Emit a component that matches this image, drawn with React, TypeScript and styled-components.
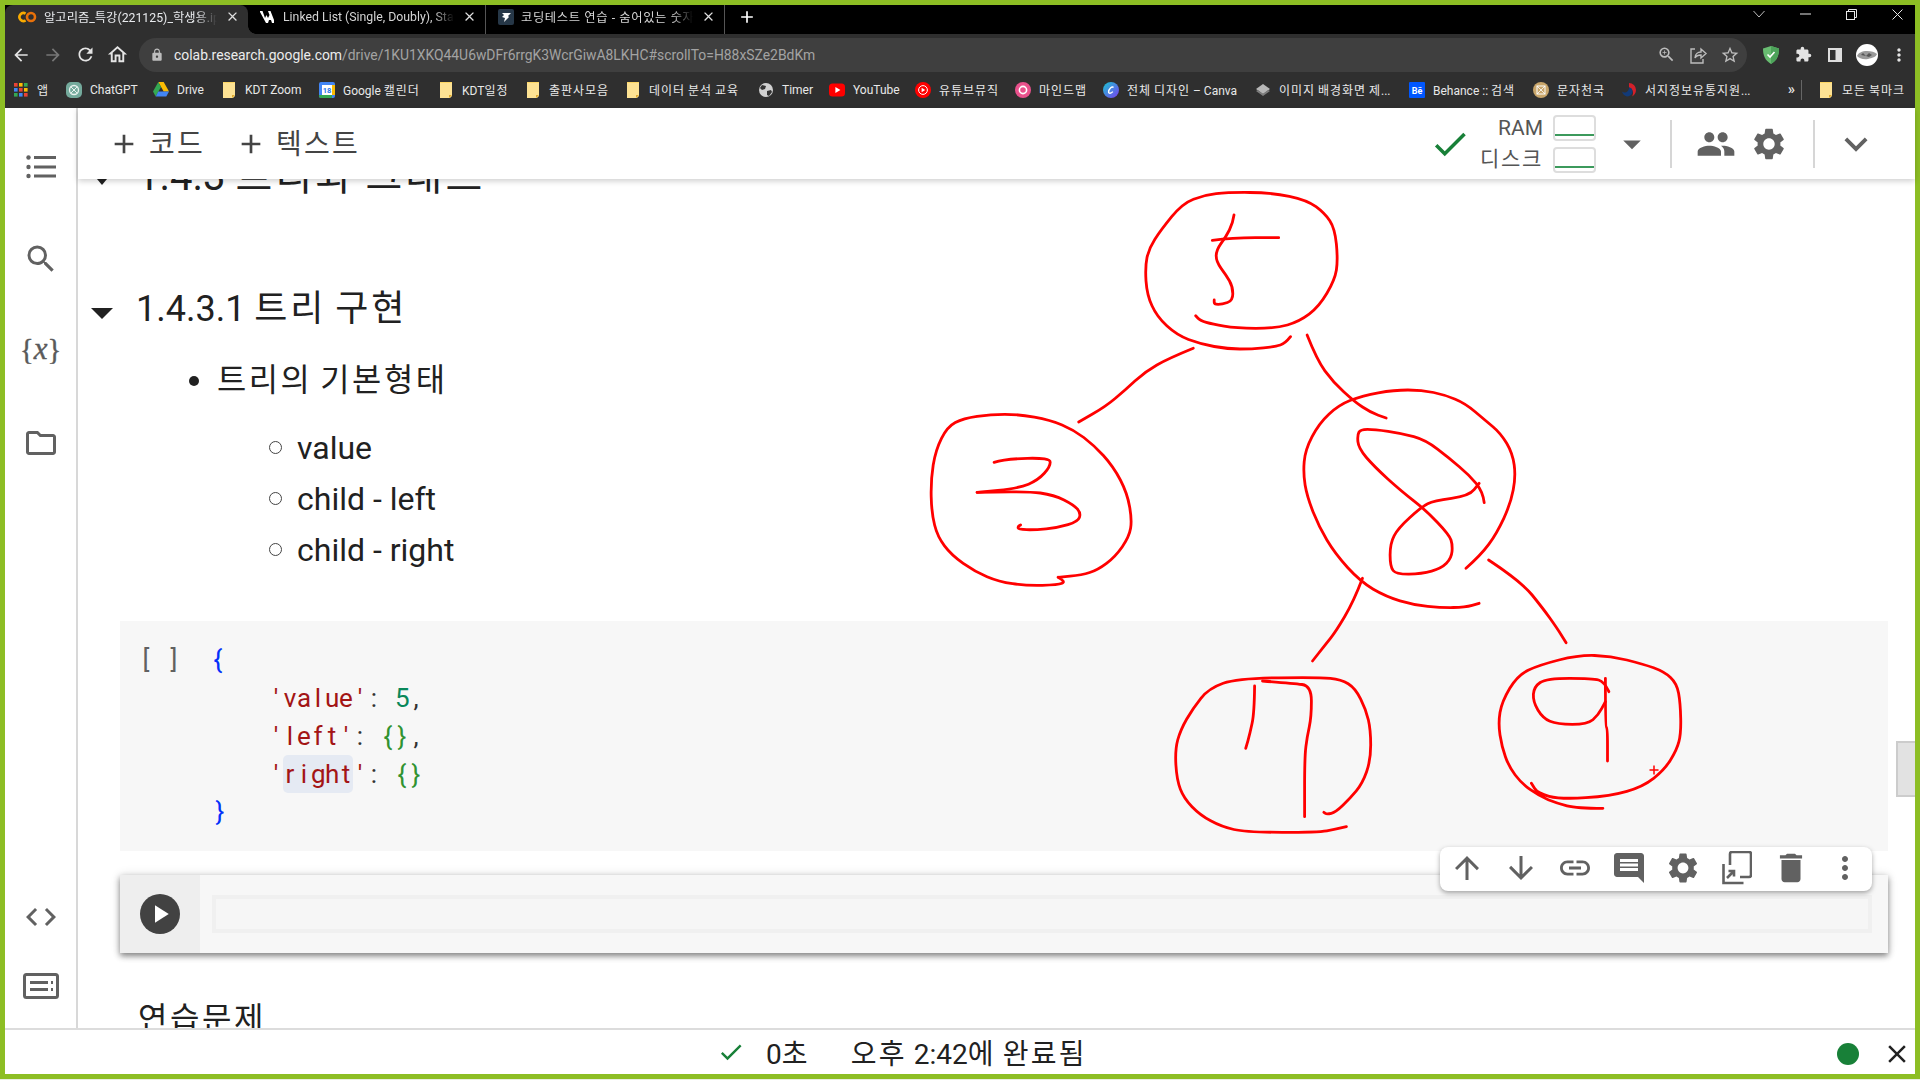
import React from "react";
import styled, { createGlobalStyle } from "styled-components";
import {
  MdAdd, MdArrowBack, MdArrowDownward, MdArrowForward, MdArrowUpward, MdCheck, MdClose, MdCode, MdDelete,
  MdExpandMore, MdExtension, MdInsertComment, MdLink, MdLock, MdMoreVert, MdOutlineFolder, MdOutlineHome,
  MdPeople, MdPlayArrow, MdRefresh, MdSearch, MdSettings, MdStarBorder, MdZoomIn, MdArrowDropDown,
} from "react-icons/md";

const SANS = `Roboto, "Noto Sans CJK KR", sans-serif`;

const Global = createGlobalStyle`
  html, body { margin: 0; padding: 0; background: #e9efe0; }
  #root { width: 1920px; height: 1080px; overflow: hidden; }
  * { box-sizing: border-box; }
`;

const Frame = styled.div`
  width: 1920px; height: 1079px; padding: 5px; background: #8dbe24;
  display: flex; flex-direction: column; font-family: ${SANS}; overflow: hidden;
`;

/* Hangul runs are set with a wider advance, as in the reference's Korean face */
const Ko = styled.span`
  letter-spacing: 0.08em;
`;
const K: React.FC<{ children: string }> = ({ children }) => (
  <>{children.split(/([가-힣]+)/).map((s, i) => (i % 2 ? <Ko key={i}>{s}</Ko> : s))}</>
);

/* ---------- Chrome tab strip ---------- */
const TabStrip = styled.div`
  height: 29px; flex: none; background: #000; display: flex; align-items: stretch; color: #e8eaed;
`;
const Tab = styled.div<{ $active?: boolean; $w: number; $afterActive?: boolean; $sep?: boolean }>`
  width: ${(p) => p.$w}px; flex: none; position: relative; display: flex; align-items: center; gap: 7px;
  padding: 0 8px 6px 12px; font-size: 12.3px;
  background: ${(p) => (p.$active ? "#2f2f2f" : "#000")};
  border-radius: ${(p) => (p.$active ? "8px 8px 0 0" : "0")};
  border-right: ${(p) => (p.$sep ? "1px solid #555" : "none")};
  &::before {
    content: ""; display: ${(p) => (p.$afterActive ? "block" : "none")};
    position: absolute; left: 0; bottom: 0; width: 8px; height: 8px;
    background: radial-gradient(circle at 100% 0, transparent 7.5px, #2f2f2f 8px);
  }
`;
const TabTitle = styled.span<{ $dim?: boolean; $wide?: boolean }>`
  flex: 1; overflow: hidden; white-space: nowrap; min-width: 0;
  color: ${(p) => (p.$dim ? "#d5d5d5" : "#e8eaed")};
  letter-spacing: ${(p) => (p.$wide ? "0.6px" : "0")};
  -webkit-mask-image: linear-gradient(90deg, #000 88%, transparent 100%);
  mask-image: linear-gradient(90deg, #000 88%, transparent 100%);
`;
const TabClose = styled.span`
  flex: none; width: 16px; height: 16px; display: flex; align-items: center; justify-content: center; color: #e0e0e0;
`;
const NewTab = styled.div`
  width: 44px; flex: none; display: flex; align-items: center; justify-content: center; padding-bottom: 5px; color: #fff;
`;
const WindowControls = styled.div`
  margin-left: auto; margin-right: -5px; display: flex; align-items: flex-start;
`;
const WinButton = styled.div`
  width: 46px; height: 18px; display: flex; align-items: center; justify-content: center;
`;

/* ---------- Chrome toolbar ---------- */
const Toolbar = styled.div`
  height: 41px; flex: none; background: #2f2f2f; display: flex; align-items: center;
`;
const NavButton = styled.div<{ $dim?: boolean }>`
  width: 32px; height: 32px; flex: none; display: flex; align-items: center; justify-content: center;
  color: ${(p) => (p.$dim ? "#777" : "#e4e4e4")};
`;
const OmniButton = styled(NavButton)`
  color: #bdbdbd; position: relative; left: -1px;
`;
const Omnibox = styled.div`
  flex: 1; height: 34px; margin-left: 6px; border-radius: 17px; background: #3f3f3f;
  display: flex; align-items: center; padding-left: 11px; color: #bdbdbd;
`;
const Url = styled.div`
  margin-left: 10px; font-size: 13.9px; white-space: nowrap; color: #a3a3a3; flex: 1;
  b { font-weight: 400; color: #ececec; }
`;
const ExtGroup = styled.div`
  display: flex; margin-left: 8px;
`;

/* ---------- Bookmarks ---------- */
const BookmarkBar = styled.div`
  height: 33px; flex: none; background: #2f2f2f; display: flex; align-items: center;
  padding: 0 10px 4px 8px; font-size: 12px; color: #e8e8e8;
`;
const Bookmark = styled.div<{ $w: number }>`
  width: ${(p) => p.$w}px; flex: none; display: flex; align-items: center; gap: 8px; white-space: nowrap;
`;
const BookmarkEnd = styled.div`
  margin-left: auto; display: flex; align-items: center; gap: 8px;
`;
const Chevrons = styled.span`
  font-size: 15px; line-height: 15px; font-weight: 500; margin-right: -8px;
`;
const BarSep = styled.div`
  width: 1px; height: 20px; background: #666; margin: 0 8px 0 6px;
`;

/* ---------- Notebook ---------- */
const Notebook = styled.div`
  flex: 1; min-height: 0; background: #fff; display: flex; flex-direction: column;
`;
const Workspace = styled.div`
  flex: 1; min-height: 0; display: flex;
`;
const Sidebar = styled.aside`
  width: 73px; flex: none; border-right: 2px solid #d8d8d8; display: flex; flex-direction: column;
  align-items: center; padding: 41px 0 24px; color: #616161;
`;
const SideIcon = styled.div<{ $gap?: number; $push?: boolean }>`
  width: 36px; height: 36px; display: flex; align-items: center; justify-content: center;
  margin-top: ${(p) => (p.$push ? "auto" : `${p.$gap ?? 0}px`)}; flex: none;
`;
const VarIcon = styled.span`
  font-family: "Liberation Serif", serif; font-size: 29px; line-height: 30px; color: #5a5a5a; white-space: nowrap;
  padding-bottom: 5px; -webkit-text-stroke: 0.4px #5a5a5a;
  i { font-size: 31px; }
`;
const Pane = styled.div`
  flex: 1; min-width: 0; display: flex; flex-direction: column;
`;
const Header = styled.header`
  height: 71px; flex: none; background: #fff; display: flex; align-items: center; padding: 0 36px 0 30px;
  position: relative; z-index: 3; box-shadow: 0 2px 6px rgba(0, 0, 0, 0.2); color: #444;
`;
const AddButton = styled.div<{ $gap?: number }>`
  display: flex; align-items: center; gap: 9px; font-size: 28px; margin-left: ${(p) => p.$gap ?? 0}px; color: #444;
  span { position: relative; top: -1px; }
`;
const HeaderRight = styled.div`
  margin-left: auto; display: flex; align-items: center;
`;
const GreenCheck = styled.div`
  color: #188038; margin-right: 2px; display: flex; width: 42px; justify-content: center;
`;
const Labels = styled.div`
  width: 70px; text-align: right; font-size: 21px; line-height: 31px; color: #555; margin-right: 10px;
`;
const Meters = styled.div`
  display: flex; flex-direction: column; gap: 6px;
`;
const Meter = styled.div`
  width: 43px; height: 26px; border: 2px solid #ddd; border-radius: 4px; display: flex;
  align-items: flex-end; padding-bottom: 3px;
  &::after { content: ""; display: block; width: 100%; height: 2px; background: #3c9a5c; }
`;
const HeadSep = styled.div`
  width: 2px; height: 48px; background: #d6d6d6; flex: none;
`;
const HeadIcon = styled.div<{ $l: number }>`
  margin-left: ${(p) => p.$l}px; display: flex; color: #616161; flex: none;
`;

const Scroller = styled.div`
  flex: 1; min-height: 0; position: relative; overflow: hidden; color: #212121;
`;
const CutHeading = styled.h2`
  margin: -22px 0 0; height: 40px; font-size: 40px; line-height: 40px; font-weight: 400;
  padding-left: 59px; position: relative; white-space: nowrap;
`;
const SectionHeading = styled.h3`
  margin: 90px 0 0; height: 44px; font-size: 36px; line-height: 44px; font-weight: 400; white-space: nowrap;
  padding-left: 58px; position: relative;
`;
const Caret = styled.span<{ $y: number; $small?: boolean; $x: number }>`
  position: absolute; left: ${(p) => p.$x}px; top: ${(p) => p.$y}px; width: 0; height: 0;
  border-style: solid; border-color: #212121 transparent transparent;
  border-width: ${(p) => (p.$small ? "6px 5px 0" : "11px 11px 0")};
`;
const BulletRow = styled.div`
  margin: 24px 0 0; height: 51px; line-height: 51px; font-size: 31.8px; display: flex; align-items: center;
  padding-left: 111px; white-space: pre;
  &::before { content: ""; width: 10px; height: 10px; border-radius: 50%; background: #212121; margin-right: 18px; flex: none; }
`;
const SubList = styled.div`
  margin-top: 16px; padding-bottom: 45.5px;
`;
const SubRow = styled.div`
  height: 51px; font-size: 32px; display: flex; align-items: center; padding-left: 191px; white-space: nowrap;
  &::before { content: ""; width: 11px; height: 11px; border-radius: 50%; border: 1.5px solid #444; margin-right: 15px; flex: none; }
`;
const CodeCell = styled.section`
  margin: 0 27px 0 42px; height: 230px; background: #f7f7f7; display: flex; padding-top: 19px;
`;
const Gutter = styled.div`
  width: 91px; flex: none; padding-left: 19px; color: #616161;
`;
const CodeBlock = styled.div``;
const CodeLine = styled.div<{ $pad?: number; $h?: number }>`
  height: ${(p) => p.$h ?? 38}px; line-height: 38px; padding-left: ${(p) => p.$pad ?? 0}px; white-space: pre;
`;
const Ch = styled.span`
  display: inline-block; width: 14px; text-align: center; font-family: Roboto, sans-serif; font-size: 26px; line-height: 38px;
`;
const Tok = styled.span<{ $c: string; $hl?: boolean }>`
  color: ${(p) => p.$c}; display: inline-block; height: 38px;
  background: ${(p) => (p.$hl ? "#e5eaf3" : "transparent")}; border-radius: 5px;
`;
const RunCell = styled.section`
  margin: 24px 27px 0 42px; height: 78px; background: #f7f7f7; display: flex; position: relative;
  box-shadow: 0 3px 6px rgba(0, 0, 0, 0.45), 0 0 10px rgba(0, 0, 0, 0.12);
`;
const RunGutter = styled.div`
  width: 80px; flex: none; background: #eee; display: flex; align-items: center; justify-content: center; padding-top: 1px;
`;
const RunButton = styled.div`
  width: 40px; height: 40px; border-radius: 50%; background: #424242; color: #fff; display: flex;
  align-items: center; justify-content: center;
`;
const Editor = styled.div`
  height: 38px; flex: 1; margin: 20px 16px 0 12px; border: 4px solid #f0f0f0; background: #f6f6f6;
`;
const CellToolbar = styled.div`
  position: absolute; top: -28px; right: 16px; width: 432px; height: 44px; background: #fff; border-radius: 8px;
  box-shadow: 0 2px 5px rgba(0, 0, 0, 0.35); display: flex; align-items: center; padding: 0 0 1px 0; color: #616161; z-index: 2;
`;
const ToolButton = styled.div`
  width: 54px; height: 42px; flex: none; display: flex; align-items: center; justify-content: center;
`;
const NextTitle = styled.div`
  margin: 43px 0 0 60px; font-size: 32px; line-height: 46px;
`;
const Sketch = styled.svg`
  position: absolute; left: 0; top: 0; pointer-events: none; z-index: 1;
`;
const ScrollThumb = styled.div`
  position: absolute; right: 0; top: 562px; width: 19px; height: 56px; background: #e2e2e2; border: 2px solid #ccc; border-right: 0; z-index: 1;
`;
const StatusBar = styled.footer`
  height: 46px; flex: none; border-top: 2px solid #dcdcdc; display: flex; align-items: center; padding: 0 3px 0 712px;
  font-size: 28px; color: #212121; background: #fff; white-space: pre;
`;
const StatusCheck = styled.div`
  display: flex; color: #188038; margin-right: 21px;
`;
const StatusTime = styled.span`
  margin-right: 41px;
`;
const StatusRight = styled.div`
  margin-left: auto; display: flex; align-items: center; gap: 23px; color: #212121; padding-top: 4px;
`;
const GreenDot = styled.div`
  width: 22px; height: 22px; border-radius: 50%; background: #188038;
`;

/* ---------- Drawings ---------- */
const Folder = () => (
  <svg width="16" height="18" viewBox="0 0 16 18">
    <path d="M2 1h12v14l-2 2H2z" fill="#fde293" />
    <path d="M11 17v-3h3z" fill="#e0a92c" />
    <path d="M2 1h12v1H2z" fill="#fdd663" />
  </svg>
);
const Fav: React.FC<{ k: string }> = ({ k }) => {
  switch (k) {
    case "apps":
      return (
        <svg width="16" height="14" viewBox="0 0 16 14">
          {["#ea4335", "#fbbc04", "#34a853", "#4285f4", "#ea4335", "#fbbc04", "#34a853", "#4285f4", "#ea4335"].map((c, i) => (
            <rect key={i} x={1 + (i % 3) * 5} y={Math.floor(i / 3) * 5} width="3.6" height="3.6" fill={c} />
          ))}
        </svg>
      );
    case "gpt":
      return (
        <svg width="16" height="16" viewBox="0 0 16 16">
          <rect width="16" height="16" rx="5" fill="#74aa9c" />
          <circle cx="8" cy="8" r="4.5" fill="none" stroke="#e8f2ef" strokeWidth="1.3" />
          <path d="M5 5l6 6M11 5l-6 6" stroke="#e8f2ef" strokeWidth="1" />
        </svg>
      );
    case "drive":
      return (
        <svg width="16" height="15" viewBox="0 0 16 15">
          <path d="M5.3 0h5.4L16 9.5h-5.3z" fill="#fbbc04" />
          <path d="M5.3 0 0 9.5l2.7 4.9L8 5z" fill="#34a853" />
          <path d="M2.7 14.4h10.6L16 9.5H5.3z" fill="#4285f4" />
        </svg>
      );
    case "folder":
      return <Folder />;
    case "cal":
      return (
        <svg width="16" height="16" viewBox="0 0 16 16">
          <rect width="16" height="16" rx="2" fill="#4285f4" />
          <rect x="3" y="3" width="10" height="10" fill="#fff" />
          <path d="M0 13h13v3H2a2 2 0 0 1-2-2z" fill="#34a853" />
          <path d="M13 3h3v10h-3z" fill="#fbbc04" />
          <text x="8" y="11" fontSize="7.5" textAnchor="middle" fill="#1a73e8" fontFamily="Roboto" fontWeight="700">18</text>
        </svg>
      );
    case "globe":
      return (
        <svg width="16" height="16" viewBox="0 0 16 16">
          <circle cx="8" cy="8" r="7" fill="#d0d0d0" />
          <path d="M4 3l4 1-1 3-3 1-2-2zM9 9l4-1 1 2-3 4-2-1z" fill="#333" />
        </svg>
      );
    case "yt":
      return (
        <svg width="16" height="16" viewBox="0 0 16 16">
          <rect y="1.5" width="16" height="13" rx="3.5" fill="#f00" />
          <path d="M6.4 5v6l5-3z" fill="#fff" />
        </svg>
      );
    case "ytm":
      return (
        <svg width="16" height="16" viewBox="0 0 16 16">
          <circle cx="8" cy="8" r="8" fill="#f00" />
          <circle cx="8" cy="8" r="4.4" fill="none" stroke="#fff" />
          <path d="M6.6 5.8v4.4L10.2 8z" fill="#fff" />
        </svg>
      );
    case "mind":
      return (
        <svg width="16" height="16" viewBox="0 0 16 16">
          <circle cx="8" cy="8" r="8" fill="#e9518c" />
          <circle cx="8" cy="8" r="3.6" fill="none" stroke="#fff" strokeWidth="1.6" />
        </svg>
      );
    case "canva":
      return (
        <svg width="16" height="16" viewBox="0 0 16 16">
          <defs>
            <linearGradient id="cv" x1="0" y1="0" x2="1" y2="1">
              <stop offset="0" stopColor="#19c6d0" />
              <stop offset="1" stopColor="#7b3ff2" />
            </linearGradient>
          </defs>
          <circle cx="8" cy="8" r="8" fill="url(#cv)" />
          <path d="M10.5 5.4C9 3.8 5.6 7 5.6 10c0 2 2.6 1.4 4.2-.4" fill="none" stroke="#fff" strokeWidth="1.4" />
        </svg>
      );
    case "img":
      return (
        <svg width="16" height="14" viewBox="0 0 16 14">
          <path d="M8 1l7 5-7 5-7-5z" fill="#b7b7b7" />
          <path d="M1 8l7 5 7-5-2-1-5 4-5-4z" fill="#7d7d7d" />
        </svg>
      );
    case "be":
      return (
        <svg width="16" height="16" viewBox="0 0 16 16">
          <rect width="16" height="16" rx="1" fill="#0057ff" />
          <text x="8" y="11.5" fontSize="9" textAnchor="middle" fill="#fff" fontWeight="700" fontFamily="Roboto">Bē</text>
        </svg>
      );
    case "mun":
      return (
        <svg width="16" height="16" viewBox="0 0 16 16">
          <circle cx="8" cy="8" r="8" fill="#c9a66b" />
          <rect x="4" y="4" width="8" height="8" fill="none" stroke="#fff" />
          <path d="M4 4l8 8M12 4l-8 8" stroke="#fff" strokeWidth=".8" />
        </svg>
      );
    case "kisti":
      return (
        <svg width="16" height="16" viewBox="0 0 16 16">
          <path d="M8 1a7 7 0 0 1 7 7c0 3-2 5.500-4 6.500 2-3 1-8-3-9z" fill="#d3202a" />
          <path d="M8 5.500c3 0 4 3 3 6-1 2-3 3-5 3a7 7 0 0 1-5-5c2 2 7 1 7-4z" fill="#123a78" />
        </svg>
      );
    default:
      return null;
  }
};

const ColabLogo = () => (
  <svg width="20" height="12" viewBox="0 0 20 12">
    <path d="M8.6 2.6A4 4 0 1 0 8.600 9.400" fill="none" stroke="#f9ab00" strokeWidth="2.600" />
    <circle cx="14" cy="6" r="4" fill="none" stroke="#e8710a" strokeWidth="2.600" />
  </svg>
);
const VaLogo = () => (
  <svg width="16" height="12" viewBox="0 0 16 12">
    <path d="M0 0h2.500L5 7l1.500-3 1.500 3 1.500-3L8 0h2.500L14 9v3h-2l-1-3H9l-1 3H6L0 1z" fill="#fff" />
  </svg>
);
const ProgLogo = () => (
  <svg width="16" height="16" viewBox="0 0 16 16">
    <rect width="16" height="16" rx="2" fill="#263747" />
    <path d="M4 4h9l-3 3 1 1-5 5 1-4-3-1 2-2z" fill="#fff" />
  </svg>
);
const ShareIcon = () => (
  <svg width="20" height="20" viewBox="0 0 20 20" fill="none" stroke="currentColor" strokeWidth="1.400">
    <path d="M7 4H3v14h12v-4" />
    <path d="M7 13c0-4 3-6 6-6V4l5 4.500-5 4.500V10c-3 0-5 1-6 3z" />
  </svg>
);
const ShieldIcon = () => (
  <svg width="16" height="18" viewBox="0 0 16 18">
    <path d="M8 0l8 2.500c0 7-2 12-8 15.500C2 14.500 0 9.500 0 2.500z" fill="#68bc71" />
    <path d="M8 0l8 2.500c0 7-2 12-8 15.500z" fill="#4da35a" />
    <path d="M4.500 8.500l2.500 2.500 4.500-5" fill="none" stroke="#fff" strokeWidth="1.600" />
  </svg>
);
const PanelIcon = () => (
  <svg width="14" height="14" viewBox="0 0 14 14">
    <rect x="0" y="0" width="14" height="14" fill="#dedede" />
    <rect x="2" y="2" width="5.500" height="10" fill="#2f2f2f" />
  </svg>
);
const Avatar = () => (
  <svg width="22" height="22" viewBox="0 0 22 22">
    <circle cx="11" cy="11" r="11" fill="#fff" />
    <path d="M1 12c1-3 5-5 10-5 4 0 8 1 10 3-1 3-5 4-9 5-5 1-9-1-11-3z" fill="#9a9a9a" />
    <path d="M5 11l2-2 3 3 3-3 3 2-3 2-3-1z" fill="#555" />
  </svg>
);
const TocIcon = () => (
  <svg width="30" height="24" viewBox="0 0 30 24" fill="#616161">
    <circle cx="2.500" cy="2.500" r="2.200" /><rect x="8" y="1" width="22" height="3" />
    <circle cx="2.500" cy="12" r="2.200" /><rect x="8" y="10.500" width="22" height="3" />
    <circle cx="2.500" cy="21" r="2.200" /><rect x="8" y="19.500" width="22" height="3" />
  </svg>
);
const TerminalIcon = () => (
  <svg width="36" height="26" viewBox="0 0 36 26" fill="none">
    <rect x="1.500" y="1.500" width="33" height="23" rx="2" stroke="#616161" strokeWidth="3" />
    <path d="M7 9.500h18M7 16.500h18" stroke="#616161" strokeWidth="3" />
    <path d="M28 9.500h2M28 16.500h2" stroke="#616161" strokeWidth="3" />
  </svg>
);
const MirrorIcon = () => (
  <svg width="30" height="34" viewBox="0 0 30 34" fill="none" stroke="#616161" strokeWidth="2.600">
    <path d="M8 14V3a2 2 0 0 1 2-2h17a2 2 0 0 1 2 2v21a2 2 0 0 1-2 2h-9" />
    <path d="M1.500 13v19h20" />
    <path d="M5 27l7-7M6.500 20H12v5.500" />
  </svg>
);

/* ---------- Hand sketch ---------- */
type P = number[][];
const path = (ox: number, oy: number, kx: number, pts: P) => {
  const q = pts.map(([x, y]) => [ox + x / kx, oy + y / 3]);
  let d = `M${q[0][0].toFixed(1)} ${q[0][1].toFixed(1)}`;
  for (let i = 1; i < q.length - 1; i++) {
    const mx = (q[i][0] + q[i + 1][0]) / 2;
    const my = (q[i][1] + q[i + 1][1]) / 2;
    d += ` Q${q[i][0].toFixed(1)} ${q[i][1].toFixed(1)} ${mx.toFixed(1)} ${my.toFixed(1)}`;
  }
  const l = q[q.length - 1];
  return d + ` L${l[0].toFixed(1)} ${l[1].toFixed(1)}`;
};
const upper: P[] = [
  [[988,500],[975,520],[950,530],[890,537],[830,537],[760,522],[700,495],[650,440],[625,375],[620,290],[630,235],[660,180],[715,100],[770,75],[830,67],[940,68],[1030,90],[1075,130],[1100,175],[1108,270],[1100,330],[1060,410],[1010,455],[950,475],[850,475],[790,462],[760,452],[748,437]],
  [[845,135],[842,160],[825,200],[800,240],[800,275],[825,315],[842,350],[842,392],[815,403],[795,403],[795,390]],
  [[790,211],[840,203],[958,203]],
  [[742,535],[680,565],[620,605],[570,660],[520,710],[452,756]],
  [[1030,495],[1055,570],[1095,635],[1150,695],[1190,727],[1230,744]],
  [[400,1222],[420,1235],[400,1245],[320,1247],[250,1235],[190,1205],[130,1155],[95,1100],[80,1030],[78,930],[90,840],[120,770],[160,745],[230,733],[300,733],[380,750],[440,780],[490,825],[540,890],[575,970],[587,1050],[580,1100],[545,1160],[500,1200],[460,1215],[400,1222]],
  [[238,877],[265,867],[380,863],[380,890],[350,930],[300,955],[195,967]],
  [[195,967],[320,963],[390,975],[440,1005],[458,1030],[450,1055],[400,1073],[340,1080],[300,1078],[298,1070],[305,1065]],
  [[1432,1195],[1470,1155],[1510,1090],[1545,1000],[1558,920],[1550,850],[1520,790],[1480,750],[1430,700],[1380,675],[1320,660],[1250,660],[1170,677],[1110,705],[1060,760],[1025,840],[1020,910],[1030,980],[1060,1070],[1100,1150],[1165,1235],[1230,1280],[1300,1305],[1370,1313],[1430,1312],[1465,1300]],
  [[1478,998],[1475,965],[1440,915],[1390,865],[1330,810],[1270,790],[1200,778],[1165,778],[1157,795],[1160,835],[1200,890],[1270,965],[1330,1020],[1390,1095],[1398,1125],[1395,1165],[1370,1195],[1320,1212],[1255,1213],[1240,1190],[1240,1120],[1260,1075],[1320,1010],[1350,992],[1440,978],[1465,940]],
];
const lower: P[] = [
  [[948,0],[1040,65],[1100,145],[1140,205],[1165,248]],
  [[595,55],[570,125],[520,215],[490,255],[455,303]],
  [[550,800],[520,808],[470,817],[270,817],[200,800],[140,765],[95,715],[75,660],[70,570],[85,510],[120,445],[165,385],[245,355],[475,352],[535,358],[575,385],[605,450],[618,510],[618,600],[595,670],[560,715],[520,757],[495,763],[487,757]],
  [[293,378],[292,460],[280,520],[268,565]],
  [[315,363],[400,370],[452,377],[452,470],[440,530],[433,590],[433,770]],
  [[1268,745],[1195,745],[1140,730],[1090,708],[1040,670],[1005,620],[985,560],[975,490],[985,425],[1030,345],[1090,315],[1200,285],[1290,288],[1380,312],[1440,335],[1475,370],[1485,430],[1487,520],[1475,570],[1440,630],[1380,680],[1290,708],[1150,718],[1085,700],[1068,670]],
  [[1285,395],[1272,365],[1240,355],[1110,355],[1075,380],[1072,425],[1100,475],[1140,493],[1225,493],[1255,465],[1275,425]],
  [[1275,355],[1275,500],[1281,505],[1281,603]],
];

const Glyphs: React.FC<{ t: string }> = ({ t }) => (
  <>
    {Array.from(t).map((c, i) => (
      <Ch key={i}>{c}</Ch>
    ))}
  </>
);

const marks: [string, string, number][] = [
  ["apps", "앱", 53], ["gpt", "ChatGPT", 87], ["drive", "Drive", 68], ["folder", "KDT Zoom", 98],
  ["cal", "Google 캘린더", 119], ["folder", "KDT일정", 87], ["folder", "출판사모음", 100], ["folder", "데이터 분석 교육", 133],
  ["globe", "Timer", 71], ["yt", "YouTube", 86], ["ytm", "유튜브뮤직", 100], ["mind", "마인드맵", 88],
  ["canva", "전체 디자인 – Canva", 152], ["img", "이미지 배경화면 제...", 154], ["be", "Behance :: 검색", 124], ["mun", "문자천국", 88],
  ["kisti", "서지정보유통지원...", 150],
];

const STR = "#a31515";
const GRN = "#319331";
const BLU = "#0431fa";
const INK = "#333";

export default function App() {
  return (
    <>
      <Global />
      <Frame>
        <TabStrip>
          <Tab $active $w={243}>
            <ColabLogo />
            <TabTitle>알고리즘_특강(221125)_학생용.ipynb</TabTitle>
            <TabClose><MdClose size={15} /></TabClose>
          </Tab>
          <Tab $w={238} $afterActive $sep>
            <VaLogo />
            <TabTitle $dim>Linked List (Single, Doubly), Stack, Queue</TabTitle>
            <TabClose><MdClose size={15} /></TabClose>
          </Tab>
          <Tab $w={239} $sep>
            <ProgLogo />
            <TabTitle $dim $wide>코딩테스트 연습 - 숨어있는 숫자의 덧셈</TabTitle>
            <TabClose><MdClose size={15} /></TabClose>
          </Tab>
          <NewTab><MdAdd size={20} /></NewTab>
          <WindowControls>
            <WinButton>
              <svg width="12" height="8" viewBox="0 0 12 8" fill="none" stroke="#bbb"><path d="M.5 1 6 7l5.500-6" /></svg>
            </WinButton>
            <WinButton><svg width="11" height="2" viewBox="0 0 11 2"><path d="M0 1h11" stroke="#e8e8e8" /></svg></WinButton>
            <WinButton>
              <svg width="11" height="11" viewBox="0 0 11 11" fill="none" stroke="#e8e8e8"><rect x=".5" y="2.500" width="8" height="8" /><path d="M2.500 2.500v-2h8v8h-2" /></svg>
            </WinButton>
            <WinButton>
              <svg width="11" height="11" viewBox="0 0 11 11" fill="none" stroke="#e8e8e8"><path d="M.5.500l10 10M10.500.500l-10 10" /></svg>
            </WinButton>
          </WindowControls>
        </TabStrip>

        <Toolbar>
          <NavButton><MdArrowBack size={20} /></NavButton>
          <NavButton $dim><MdArrowForward size={20} /></NavButton>
          <NavButton><MdRefresh size={21} /></NavButton>
          <NavButton><MdOutlineHome size={23} /></NavButton>
          <Omnibox>
            <MdLock size={14} />
            <Url><b>colab.research.google.com</b>/drive/1KU1XKQ44U6wDFr6rrgK3WcrGiwA8LKHC#scrollTo=H88xSZe2BdKm</Url>
            <OmniButton><MdZoomIn size={19} /></OmniButton>
            <OmniButton><ShareIcon /></OmniButton>
            <OmniButton><MdStarBorder size={20} /></OmniButton>
          </Omnibox>
          <ExtGroup>
            <NavButton><ShieldIcon /></NavButton>
            <NavButton><MdExtension size={17} /></NavButton>
            <NavButton><PanelIcon /></NavButton>
            <NavButton><Avatar /></NavButton>
            <NavButton><MdMoreVert size={20} /></NavButton>
          </ExtGroup>
        </Toolbar>

        <BookmarkBar>
          {marks.map(([k, t, w]) => (
            <Bookmark key={t} $w={w}><Fav k={k} /><span><K>{t}</K></span></Bookmark>
          ))}
          <BookmarkEnd>
            <Chevrons>»</Chevrons>
            <BarSep />
            <Folder />
            <span><K>모든 북마크</K></span>
          </BookmarkEnd>
        </BookmarkBar>

        <Notebook>
          <Workspace>
            <Sidebar>
              <SideIcon><TocIcon /></SideIcon>
              <SideIcon $gap={56}><MdSearch size={36} /></SideIcon>
              <SideIcon $gap={56}><VarIcon>{"{"}<i>x</i>{"}"}</VarIcon></SideIcon>
              <SideIcon $gap={56}><MdOutlineFolder size={42} /></SideIcon>
              <SideIcon $push><MdCode size={38} /></SideIcon>
              <SideIcon $gap={33}><TerminalIcon /></SideIcon>
            </Sidebar>
            <Pane>
              <Header>
                <AddButton><MdAdd size={32} /><span><K>코드</K></span></AddButton>
                <AddButton $gap={30}><MdAdd size={32} /><span><K>텍스트</K></span></AddButton>
                <HeaderRight>
                  <GreenCheck><MdCheck size={42} /></GreenCheck>
                  <Labels>RAM<br /><K>디스크</K></Labels>
                  <Meters><Meter /><Meter /></Meters>
                  <HeadIcon $l={15}><MdArrowDropDown size={42} /></HeadIcon>
                  <HeadIcon $l={17}><HeadSep /></HeadIcon>
                  <HeadIcon $l={24}><MdPeople size={40} /></HeadIcon>
                  <HeadIcon $l={14}><MdSettings size={38} /></HeadIcon>
                  <HeadIcon $l={25}><HeadSep /></HeadIcon>
                  <HeadIcon $l={18}><MdExpandMore size={46} /></HeadIcon>
                </HeaderRight>
              </Header>
              <Scroller>
                <CutHeading><Caret $small $x={19} $y={22} /><K>1.4.3 트리와 그래프</K></CutHeading>
                <SectionHeading><Caret $x={13} $y={21} /><K>1.4.3.1 트리 구현</K></SectionHeading>
                <BulletRow><span><K>트리의 기본형태</K></span></BulletRow>
                <SubList>
                  <SubRow>value</SubRow>
                  <SubRow>child - left</SubRow>
                  <SubRow>child - right</SubRow>
                </SubList>
                <CodeCell>
                  <Gutter><CodeLine><Glyphs t="[ ]" /></CodeLine></Gutter>
                  <CodeBlock>
                    <CodeLine $h={39}><Tok $c={BLU}><Glyphs t="{" /></Tok></CodeLine>
                    <CodeLine $pad={58}>
                      <Tok $c={STR}><Glyphs t="'value'" /></Tok>
                      <Tok $c={INK}><Glyphs t=": " /></Tok>
                      <Tok $c="#09885a"><Glyphs t="5" /></Tok>
                      <Tok $c={INK}><Glyphs t="," /></Tok>
                    </CodeLine>
                    <CodeLine $pad={58}>
                      <Tok $c={STR}><Glyphs t="'left'" /></Tok>
                      <Tok $c={INK}><Glyphs t=": " /></Tok>
                      <Tok $c={GRN}><Glyphs t="{}" /></Tok>
                      <Tok $c={INK}><Glyphs t="," /></Tok>
                    </CodeLine>
                    <CodeLine $pad={58} $h={37}>
                      <Tok $c={STR}><Glyphs t="'" /></Tok>
                      <Tok $c={STR} $hl><Glyphs t="right" /></Tok>
                      <Tok $c={STR}><Glyphs t="'" /></Tok>
                      <Tok $c={INK}><Glyphs t=": " /></Tok>
                      <Tok $c={GRN}><Glyphs t="{}" /></Tok>
                    </CodeLine>
                    <CodeLine $pad={2}><Tok $c={BLU}><Glyphs t="}" /></Tok></CodeLine>
                  </CodeBlock>
                </CodeCell>
                <RunCell>
                  <RunGutter><RunButton><MdPlayArrow size={30} /></RunButton></RunGutter>
                  <Editor />
                  <CellToolbar>
                    <ToolButton><MdArrowUpward size={36} /></ToolButton>
                    <ToolButton><MdArrowDownward size={36} /></ToolButton>
                    <ToolButton><MdLink size={36} /></ToolButton>
                    <ToolButton><MdInsertComment size={36} /></ToolButton>
                    <ToolButton><MdSettings size={36} /></ToolButton>
                    <ToolButton><MirrorIcon /></ToolButton>
                    <ToolButton><MdDelete size={38} /></ToolButton>
                    <ToolButton><MdMoreVert size={36} /></ToolButton>
                  </CellToolbar>
                </RunCell>
                <NextTitle><K>연습문제</K></NextTitle>
                <ScrollThumb />
                <Sketch width="1837" height="849" viewBox="78 179 1837 849" fill="none" stroke="#f00" strokeWidth="2.800" strokeLinecap="round" strokeLinejoin="round">
                  {upper.map((p, i) => <path key={i} d={path(900, 170, 2.53, p)} />)}
                  {lower.map((p, i) => <path key={i} d={path(1150, 560, 2.8, p)} />)}
                  <path d="M1649.500 770h9M1654 765.500v9" strokeWidth="1.500" strokeLinecap="butt" />
                </Sketch>
              </Scroller>
            </Pane>
          </Workspace>
          <StatusBar>
            <StatusCheck><MdCheck size={28} /></StatusCheck>
            <StatusTime><K>0초</K></StatusTime>
            <span><K>오후 2:42에 완료됨</K></span>
            <StatusRight>
              <GreenDot />
              <MdClose size={30} />
            </StatusRight>
          </StatusBar>
        </Notebook>
      </Frame>
    </>
  );
}
